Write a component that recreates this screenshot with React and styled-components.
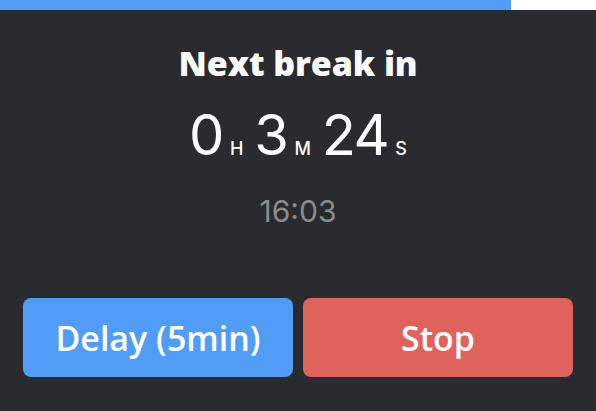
import React from "react";
import styled, { createGlobalStyle } from "styled-components";

const Global = createGlobalStyle`
  html, body { margin: 0; padding: 0; background: #2a2b2e; }
  body { font-family: "Inter", "Noto Sans", sans-serif; }
`;

const Page = styled.div`
  width: 596px;
  height: 411px;
  background: #2a2b2e;
  display: flex;
  flex-direction: column;
  overflow: hidden;
`;

const Track = styled.div`
  height: 10px;
  background: #ffffff;
  display: flex;
`;

const Fill = styled.div`
  height: 100%;
  background: #519cf7;
`;

const Content = styled.div`
  display: flex;
  flex-direction: column;
  align-items: center;
`;

const Title = styled.h1`
  margin: 33px 0 0;
  font-family: "Open Sans", sans-serif;
  font-weight: 800;
  font-size: 34px;
  line-height: 40px;
  letter-spacing: -0.1px;
  color: #fafafa;
`;

const Timer = styled.div`
  margin-top: 24px;
  display: flex;
  align-items: baseline;
  gap: 11px;
  color: #ffffff;
  line-height: 1;
`;

const Group = styled.div`
  display: flex;
  align-items: baseline;
  gap: 7px;
`;

const Num = styled.span`
  font-family: "Inter", sans-serif;
  font-weight: 400;
  font-size: 56px;
  letter-spacing: -1.5px;
`;

const Unit = styled.span`
  font-family: "Inter", sans-serif;
  font-weight: 500;
  font-size: 18px;
`;

const Clock = styled.div`
  margin-top: 33px;
  font-family: "Inter", sans-serif;
  font-size: 30px;
  line-height: 1;
  color: #8b8b8c;
`;

const Actions = styled.div`
  margin-top: auto;
  margin-bottom: 34px;
  padding: 0 23px;
  display: grid;
  grid-template-columns: 1fr 1fr;
  gap: 10px;
`;

const Button = styled.button`
  height: 79px;
  border: none;
  border-radius: 8px;
  background: ${(p) => p.$color};
  color: #ffffff;
  font-family: "Open Sans", sans-serif;
  font-weight: 600;
  font-size: 34px;
`;

export default function App() {
  const progress = 511 / 596;
  return (
    <Page>
      <Global />
      <Track>
        <Fill style={{ width: `${progress * 100}%` }} />
      </Track>
      <Content>
        <Title>Next break in</Title>
        <Timer>
          <Group><Num>0</Num><Unit>H</Unit></Group>
          <Group><Num>3</Num><Unit>M</Unit></Group>
          <Group><Num>24</Num><Unit>S</Unit></Group>
        </Timer>
        <Clock>16:03</Clock>
      </Content>
      <Actions>
        <Button $color="#519cf7">Delay (5min)</Button>
        <Button $color="#e0625d">Stop</Button>
      </Actions>
    </Page>
  );
}
